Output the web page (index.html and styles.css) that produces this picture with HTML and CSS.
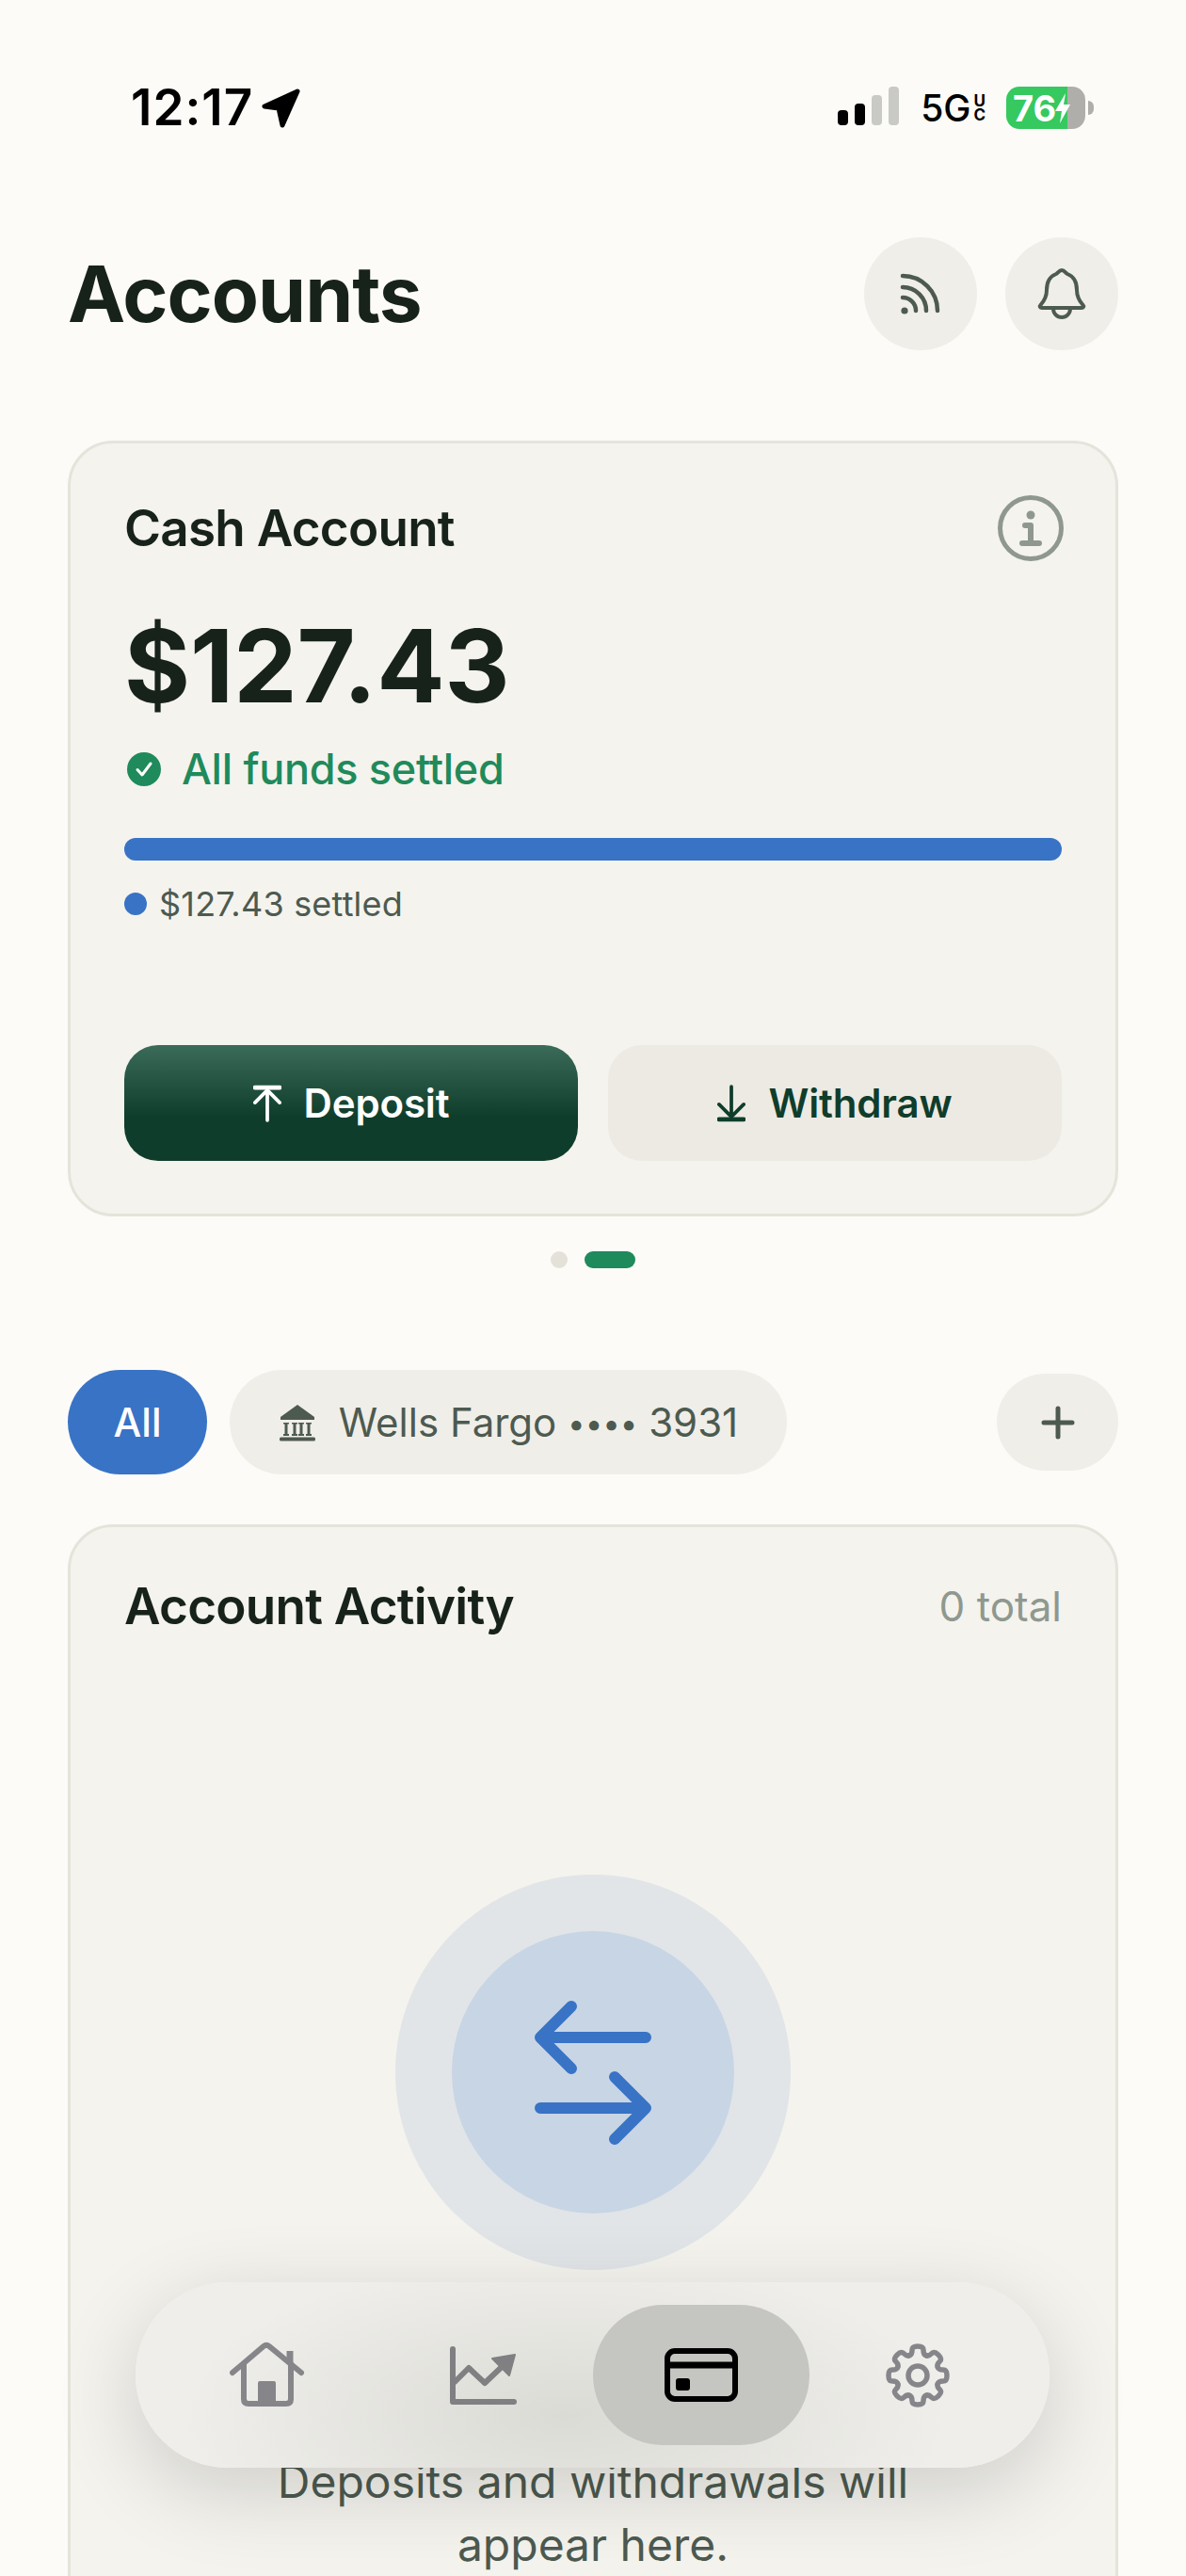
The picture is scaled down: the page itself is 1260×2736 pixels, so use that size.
FILE: index.html
```html
<!DOCTYPE html>
<html lang="en">
  <head>
    <meta charset="UTF-8" />
    <meta name="viewport" content="width=device-width, initial-scale=1.0" />
    <title>Accounts</title>
    <link rel="stylesheet" href="styles.css">
  </head>
  <body>
    <div class="page">
      <!-- status bar -->
      <div class="status">
        <div class="status-left">
          <span class="time">12:17</span>
          <svg class="loc" width="42" height="44" viewBox="0 0 42 44"><path d="M39 4 4 20 19 22 23 40Z" /></svg>
        </div>
        <div class="status-right">
          <div class="signal">
            <span class="bar on b1"></span>
            <span class="bar on b2"></span>
            <span class="bar b3"></span>
            <span class="bar b4"></span>
          </div>
          <div class="net">
            <span class="net-5g">5G</span>
            <span class="net-uc"><span>U</span><span>C</span></span>
          </div>
          <div class="battery">
            <span>76</span>
            <svg width="18" height="34" viewBox="0 0 18 34"><path d="M12 1 1 20H8L6 33 17 13H10Z" /></svg>
          </div>
          <span class="nub"></span>
        </div>
      </div>

      <!-- title row -->
      <div class="header">
        <h1>Accounts</h1>
        <div class="header-btns">
          <div class="round-btn">
            <svg width="48" height="48" viewBox="0 -2 48 48" fill="none" stroke="#4d5a50" stroke-width="4.500" stroke-linecap="round">
              <circle cx="7" cy="40" r="3.600" fill="#4d5a50" stroke="none" />
              <path d="M5 26A14 14 0 0 1 19 40" />
              <path d="M5 15A25 25 0 0 1 30 40" />
              <path d="M5 3A37 37 0 0 1 42 40" />
            </svg>
          </div>
          <div class="round-btn">
            <svg width="56" height="60" viewBox="0 0 56 60" fill="none" stroke="#4d5a50" stroke-width="4" stroke-linejoin="round">
              <path d="M28 5C25 5 24 8 22 9 14 12 12 19 12 26 12 33 9 38 5.500 42 4 43.500 5 45 7 45H49C51 45 52 43.500 50.500 42 47 38 44 33 44 26 44 19 42 12 34 9 32 8 31 5 28 5Z" />
              <path d="M19 46A9 9 0 0 0 37 46" />
            </svg>
          </div>
        </div>
      </div>

      <!-- cash account card -->
      <div class="card cash">
        <div class="card-top">
          <span class="card-title">Cash Account</span>
          <svg class="info" width="70" height="70" viewBox="0 0 70 70" fill="none" stroke="#8f988f" stroke-width="5">
            <circle cx="35" cy="35" r="32.500" />
            <circle cx="35" cy="21" r="4.500" fill="#8f988f" stroke="none" />
            <path d="M29 32H35V51M26 51H44" stroke-width="6" stroke-linecap="round" stroke-linejoin="round" />
          </svg>
        </div>
        <div class="amount">$127.43</div>
        <div class="settled">
          <svg width="36" height="36" viewBox="0 0 36 36">
            <circle cx="18" cy="18" r="18" fill="#1f8a5b" />
            <path d="M11 18.500 16 24 25 12" fill="none" stroke="#fff" stroke-width="3" stroke-linecap="round" stroke-linejoin="round" />
          </svg>
          <span>All funds settled</span>
        </div>
        <div class="progress"></div>
        <div class="legend">
          <span class="legend-dot"></span>
          <span>$127.43 settled</span>
        </div>
        <div class="actions">
          <div class="btn btn-deposit">
            <svg width="30" height="42" viewBox="0 0 32 42" fill="none" stroke="#fff" stroke-width="4" stroke-linecap="round" stroke-linejoin="round">
              <path d="M2 3H30" stroke-width="5" />
              <path d="M16 6V40M2 20 16 6 30 20" />
            </svg>
            <span>Deposit</span>
          </div>
          <div class="btn btn-withdraw">
            <svg width="30" height="42" viewBox="0 0 32 42" fill="none" stroke="#0f3d2c" stroke-width="4" stroke-linecap="round" stroke-linejoin="round">
              <path d="M2 39H30" stroke-width="5" />
              <path d="M16 2V36M2 22 16 36 30 22" />
            </svg>
            <span>Withdraw</span>
          </div>
        </div>
      </div>

      <div class="pager">
        <span class="pager-dot"></span>
        <span class="pager-dot active"></span>
      </div>

      <!-- account filter -->
      <div class="filters">
        <div class="pill pill-all">All</div>
        <div class="pill pill-bank">
          <svg width="40" height="40" viewBox="0 0 40 40" fill="#4d5a50">
            <path d="M20 1 38 14V17H2V14Z" />
            <path d="M5 20H11V21.500H9.500V32H11V34H5V32H6.500V21.500H5ZM14 20H20V21.500H18.500V32H20V34H14V32H15.500V21.500H14ZM21 20H27V21.500H25.500V32H27V34H21V32H22.500V21.500H21ZM29 20H35V21.500H33.500V32H35V34H29V32H30.500V21.500H29Z" />
            <rect x="1" y="35.500" width="38" height="4" rx="1.500" />
          </svg>
          <span>Wells Fargo <span class="bullets">••••</span> 3931</span>
        </div>
        <div class="pill-add">
          <svg width="36" height="36" viewBox="0 0 36 36" fill="none" stroke="#4d5a50" stroke-width="5" stroke-linecap="round">
            <path d="M18 3V33M3 18H33" />
          </svg>
        </div>
      </div>

      <!-- activity card -->
      <div class="card activity">
        <div class="card-top">
          <span class="card-title">Account Activity</span>
          <span class="total">0 total</span>
        </div>
        <div class="empty-ring">
          <div class="empty-core">
            <svg width="124" height="153" viewBox="0 0 124 153" fill="none" stroke="#3873c6" stroke-width="12" stroke-linecap="round" stroke-linejoin="round">
              <path d="M6 39H118M39 6 6 39 39 72" />
              <path d="M6 114H118M85 81 118 114 85 147" />
            </svg>
          </div>
        </div>
        <p class="empty-text">Deposits and withdrawals will appear here.</p>
      </div>

      <!-- floating tab bar -->
      <nav class="tabbar">
        <div class="tab">
          <svg width="80" height="72" viewBox="0 0 80 72" fill="none" stroke="#86868a" stroke-width="6" stroke-linecap="round" stroke-linejoin="round">
            <path d="M3 33 36 5Q39 2.500 42 5L76 33" />
            <path d="M64 10V24" stroke-width="7" stroke-linecap="butt" />
            <path d="M15 24V61Q15 66 20 66H60Q65 66 65 61V24" />
            <rect x="30" y="42" width="19" height="26" rx="2" fill="#86868a" stroke="none" />
          </svg>
        </div>
        <div class="tab">
          <svg width="76" height="66" viewBox="0 0 76 66" stroke="#808083" stroke-width="6" stroke-linecap="round" stroke-linejoin="round" fill="none">
            <path d="M5 5V61H70" />
            <path d="M7 40 22 25 39 41 58 23" />
            <path d="M47 15 71 11 65 33Z" fill="#808083" stroke-width="2" />
          </svg>
        </div>
        <div class="tab active">
          <svg width="78" height="57" viewBox="0 0 78 57" fill="none" stroke="#000">
            <rect x="3" y="3" width="72" height="51" rx="8" stroke-width="6" />
            <path d="M3 18H75" stroke-width="7" />
            <rect x="12" y="32" width="15" height="13" rx="3" fill="#000" stroke="none" />
          </svg>
        </div>
        <div class="tab">
          <svg width="72" height="72" viewBox="-36 -36 72 72" fill="none" stroke="#86868a" stroke-width="5.500" stroke-linecap="round">
            <circle r="10" />
            <g id="tooth"><path d="M-8.800-21.300C-6.500-22-6-24-6-27-6-30-4-31 0-31 4-31 6-30 6-27 6-24 6.500-22 8.800-21.300" /></g>
            <use href="#tooth" transform="rotate(45)" />
            <use href="#tooth" transform="rotate(90)" />
            <use href="#tooth" transform="rotate(135)" />
            <use href="#tooth" transform="rotate(180)" />
            <use href="#tooth" transform="rotate(225)" />
            <use href="#tooth" transform="rotate(270)" />
            <use href="#tooth" transform="rotate(315)" />
          </svg>
        </div>
      </nav>
    </div>
  </body>
</html>
```

FILE: styles.css
```css
* {
  box-sizing: border-box;
}
body {
  margin: 0;
  background: #fcfbf7;
  font-family: Inter, "Noto Sans", sans-serif;
  color: #17221b;
}
.page {
  position: relative;
  height: 2736px;
  overflow: hidden;
  padding-top: 92px;
}
.status {
  display: flex;
  justify-content: space-between;
  align-items: center;
  height: 45px;
  padding: 0 98px 0 139px;
  color: #000;
}
.status-left,
.status-right {
  display: flex;
  align-items: center;
}
.time {
  font-size: 53px;
  font-weight: 600;
  line-height: 45px;
  letter-spacing: 1px;
}
.loc {
  margin-left: 8px;
  fill: #000;
  stroke: #000;
  stroke-width: 5;
  stroke-linejoin: round;
}
.signal {
  display: flex;
  align-items: flex-end;
  gap: 7px;
  height: 41px;
  margin-top: -4px;
}
.bar {
  width: 11px;
  border-radius: 4px;
  background: #c9c9c5;
}
.bar.on {
  background: #000;
}
.b1 {
  height: 16px;
}
.b2 {
  height: 23px;
}
.b3 {
  height: 32px;
}
.b4 {
  height: 41px;
}
.net {
  display: flex;
  align-items: center;
  margin-left: 23px;
}
.net-5g {
  font-size: 39px;
  font-weight: 500;
}
.net-uc {
  display: flex;
  flex-direction: column;
  margin-left: 3px;
  font-size: 17px;
  font-weight: 700;
  line-height: 15px;
}
.battery {
  display: flex;
  align-items: center;
  width: 84px;
  height: 45px;
  margin-left: 22px;
  padding-left: 7px;
  border-radius: 14px;
  background: linear-gradient(90deg, #35c95f 65px, #b0aeaa 65px);
  color: #fff;
  font-size: 38px;
  font-weight: 700;
}
.battery svg {
  margin-left: -2px;
  fill: #fff;
}
.nub {
  width: 6px;
  height: 15px;
  margin-left: 3px;
  border-radius: 0 6px 6px 0;
  background: #b0aeaa;
}
.header {
  display: flex;
  justify-content: space-between;
  align-items: center;
  margin-top: 115px;
  padding: 0 72px;
}
h1 {
  margin: 0;
  font-size: 82px;
  font-weight: 700;
  letter-spacing: -1px;
}
.header-btns {
  display: flex;
  gap: 30px;
}
.round-btn {
  display: flex;
  align-items: center;
  justify-content: center;
  width: 120px;
  height: 120px;
  border-radius: 50%;
  background: #f0eee8;
}
.card {
  margin: 0 72px;
  border: 3px solid #e6e3da;
  border-radius: 48px;
  background: #f4f3ee;
}
.cash {
  height: 824px;
  margin-top: 96px;
  padding: 55px 57px 0;
}
.card-top {
  display: flex;
  justify-content: space-between;
  align-items: center;
}
.info {
  margin-right: -2px;
}
.card-title {
  font-size: 53px;
  font-weight: 600;
  letter-spacing: -0.750px;
}
.amount {
  margin-top: 48px;
  font-size: 107px;
  font-weight: 700;
  line-height: 126px;
}
.settled {
  display: flex;
  align-items: center;
  gap: 22px;
  margin-top: 19px;
  padding-left: 3px;
  color: #1f8a5b;
  font-size: 45px;
  font-weight: 500;
  letter-spacing: -0.300px;
}
.progress {
  height: 24px;
  margin-top: 46px;
  border-radius: 12px;
  background: #3873c6;
}
.legend {
  display: flex;
  align-items: center;
  gap: 13px;
  margin-top: 24px;
  color: #4d5a50;
  font-size: 36px;
  letter-spacing: 0.200px;
}
.legend-dot {
  width: 24px;
  height: 24px;
  border-radius: 50%;
  background: #3873c6;
}
.actions {
  display: flex;
  gap: 32px;
  margin-top: 128px;
}
.btn {
  display: flex;
  flex: 1;
  align-items: center;
  justify-content: center;
  gap: 24px;
  height: 123px;
  border-radius: 36px;
  font-size: 42px;
  font-weight: 600;
  letter-spacing: -0.150px;
}
.btn-deposit {
  background: linear-gradient(180deg, #3b6b59 0%, #0f3d2c 62%);
  color: #fff;
}
.btn-withdraw {
  background: #edeae3;
  color: #0f3d2c;
}
.pager {
  display: flex;
  justify-content: center;
  gap: 18px;
  margin-top: 37px;
}
.pager-dot {
  width: 18px;
  height: 18px;
  border-radius: 9px;
  background: #e4e1d8;
}
.pager-dot.active {
  width: 54px;
  background: #1f8a5b;
}
.filters {
  display: flex;
  align-items: center;
  gap: 24px;
  margin-top: 108px;
  padding: 0 72px;
}
.pill {
  display: flex;
  align-items: center;
  justify-content: center;
  height: 111px;
  border-radius: 56px;
  font-size: 42px;
}
.pill-all {
  width: 148px;
  background: #3873c6;
  color: #fff;
  font-weight: 500;
}
.pill-bank {
  gap: 24px;
  width: 592px;
  background: #f0eee8;
  color: #4d5a50;
}
.bullets {
  font-size: 33px;
  vertical-align: 2px;
}
.pill-add {
  display: flex;
  align-items: center;
  justify-content: center;
  width: 129px;
  height: 103px;
  margin-left: auto;
  border-radius: 52px;
  background: #f0eee8;
}
.activity {
  height: 1200px;
  margin-top: 53px;
  padding: 52px 57px 0;
}
.total {
  color: #8f988f;
  font-size: 44px;
}
.empty-ring {
  display: flex;
  align-items: center;
  justify-content: center;
  width: 420px;
  height: 420px;
  margin: 253px auto 0;
  border-radius: 50%;
  background: #e1e5e8;
}
.empty-core {
  display: flex;
  align-items: center;
  justify-content: center;
  width: 300px;
  height: 300px;
  border-radius: 50%;
  background: #c8d5e5;
}
.empty-text {
  width: 720px;
  margin: 191px auto 0;
  color: #4d5a50;
  font-size: 48px;
  line-height: 67px;
  text-align: center;
}
.tabbar {
  position: absolute;
  top: 2424px;
  left: 144px;
  display: flex;
  align-items: center;
  width: 971px;
  height: 197px;
  padding: 0 25px;
  border-radius: 98px;
  background: radial-gradient(ellipse 42% 85% at 47% 72%, #dbdbd6, #efeeea);
  box-shadow: 0 24px 90px rgba(0, 0, 0, 0.16);
}
.tab {
  display: flex;
  flex: 1;
  align-items: center;
  justify-content: center;
  height: 149px;
  border-radius: 75px;
}
.tab.active {
  background: #c5c5c1;
}
```
